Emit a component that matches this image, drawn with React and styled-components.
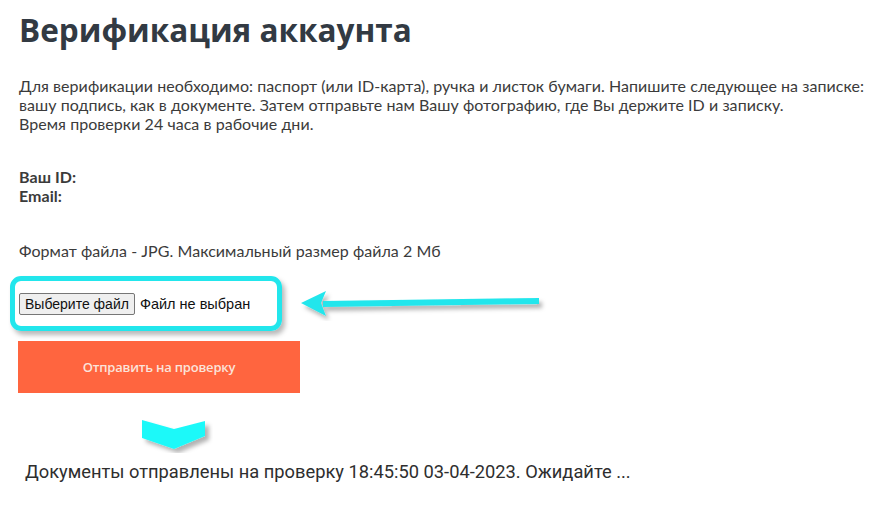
import React from "react";
import styled, { createGlobalStyle } from "styled-components";

const GlobalStyle = createGlobalStyle`
  body {
    margin: 0;
    background: #ffffff;
    font-family: "Lato", "Open Sans", sans-serif;
  }
`;

const Page = styled.div`
  width: 870px;
  height: 505px;
  padding: 0 0 0 19px;
  box-sizing: border-box;
  overflow: hidden;
`;

const Title = styled.h1`
  margin: 0;
  padding-top: 9px;
  font-family: "Open Sans", sans-serif;
  font-size: 31.5px;
  line-height: 42px;
  font-weight: 700;
  color: #323a43;
`;

const Text = styled.p`
  margin: ${(p) => p.$top || 0}px 0 0;
  font-size: 16px;
  line-height: 19px;
  color: #3b3b3b;
  white-space: nowrap;
  letter-spacing: 0.05px;
  font-weight: ${(p) => (p.$bold ? 700 : 400)};
`;

const UploadRow = styled.div`
  display: flex;
  align-items: center;
  gap: 17px;
  margin: 16px 0 0 -9px;
`;

const UploadBox = styled.div`
  width: 258px;
  height: 45px;
  border: 5px solid #22e6ec;
  border-radius: 11px;
  box-shadow: 3px 4px 5px rgba(0, 0, 0, 0.28);
  display: flex;
  align-items: center;
  padding-left: 4px;
  box-sizing: content-box;
`;

const FileButton = styled.button`
  font-family: "Liberation Sans", Arial, sans-serif;
  font-size: 14px;
  height: 22px;
  padding: 0 5px;
  background: #efefef;
  border: 1px solid #767676;
  border-radius: 2px;
  color: #111;
  margin-right: 5px;
`;

const FileName = styled.span`
  font-family: "Liberation Sans", Arial, sans-serif;
  font-size: 14.5px;
  color: #111;
`;

const SubmitButton = styled.button`
  display: block;
  margin: 10px 0 0 -1px;
  width: 282px;
  height: 52px;
  border: none;
  background: #ff653f;
  color: #fbe3da;
  font-family: "Open Sans", sans-serif;
  font-size: 13px;
  font-weight: 600;
  letter-spacing: -0.2px;
`;

const ChevronWrap = styled.div`
  margin: 26px 0 0 122px;
  width: 72px;
  height: 34px;
`;

const Status = styled.div`
  margin: 8px 0 0 6px;
  font-family: "Roboto", "Noto Sans", sans-serif;
  font-size: 18.3px;
  color: #2e2e2e;
  white-space: nowrap;
`;

const Arrow = () => (
  <svg width="250" height="34" viewBox="0 0 250 34">
    <defs>
      <filter id="as" x="-10%" y="-50%" width="130%" height="220%">
        <feDropShadow dx="3" dy="4" stdDeviation="2" floodColor="#000" floodOpacity="0.3" />
      </filter>
    </defs>
    <g filter="url(#as)">
      <polygon points="240,11 240,17 24,20 24,14" fill="#22e6ec" />
      <polygon points="2,16 27,4 22,16 27,29" fill="#22e6ec" />
    </g>
  </svg>
);

const Chevron = () => (
  <svg width="72" height="34" viewBox="0 0 72 34">
    <defs>
      <filter id="cs" x="-20%" y="-30%" width="150%" height="180%">
        <feDropShadow dx="4" dy="4" stdDeviation="2.2" floodColor="#000" floodOpacity="0.3" />
      </filter>
    </defs>
    <polygon
      points="1,1 33,10 64,2 64,17 33,30 1,19"
      fill="#1ff9f9"
      filter="url(#cs)"
    />
  </svg>
);

export default function App() {
  return (
    <Page>
      <GlobalStyle />
      <Title>Верификация аккаунта</Title>
      <Text $top={25}>
        Для верификации необходимо: паспорт (или ID-карта), ручка и листок бумаги. Напишите следующее на записке:
        <br />
        вашу подпись, как в документе. Затем отправьте нам Вашу фотографию, где Вы держите ID и записку.
        <br />
        Время проверки 24 часа в рабочие дни.
      </Text>
      <Text $top={34} $bold>
        Ваш ID:
        <br />
        Email:
      </Text>
      <Text $top={36}>Формат файла - JPG. Максимальный размер файла 2 Мб</Text>
      <UploadRow>
        <UploadBox>
          <FileButton type="button">Выберите файл</FileButton>
          <FileName>Файл не выбран</FileName>
        </UploadBox>
        <Arrow />
      </UploadRow>
      <SubmitButton type="button">Отправить на проверку</SubmitButton>
      <ChevronWrap>
        <Chevron />
      </ChevronWrap>
      <Status>Документы отправлены на проверку 18:45:50 03-04-2023. Ожидайте ...</Status>
    </Page>
  );
}
